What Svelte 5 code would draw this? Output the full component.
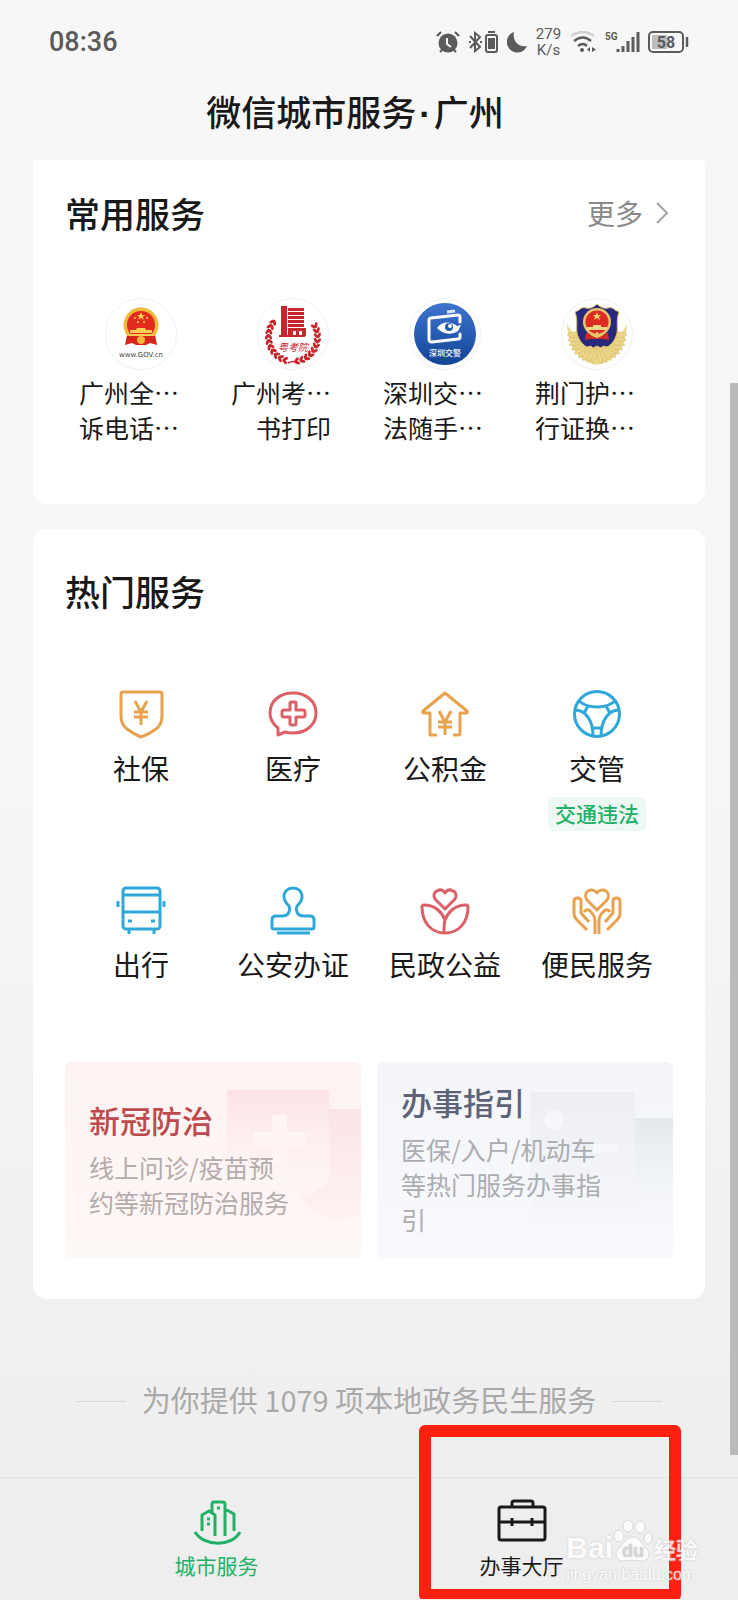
<script>
  const common = [
    { icon: 'gov', lines: ['广州全⋯', '诉电话⋯'] },
    { icon: 'exam', lines: ['广州考⋯', '书打印'] },
    { icon: 'traffic', lines: ['深圳交⋯', '法随手⋯'] },
    { icon: 'police', lines: ['荆门护⋯', '行证换⋯'] }
  ];

  const hot = [
    { icon: 'shield', label: '社保', tone: 'orange' },
    { icon: 'medical', label: '医疗', tone: 'red' },
    { icon: 'house', label: '公积金', tone: 'orange' },
    { icon: 'wheel', label: '交管', tone: 'blue', tag: '交通违法' },
    { icon: 'bus', label: '出行', tone: 'blue' },
    { icon: 'stamp', label: '公安办证', tone: 'blue' },
    { icon: 'flower', label: '民政公益', tone: 'red' },
    { icon: 'hands', label: '便民服务', tone: 'orange' }
  ];

  const tabs = [
    { id: 'city', label: '城市服务' },
    { id: 'hall', label: '办事大厅' }
  ];

  let active = $state('city');

  // wreath leaves, as angles in degrees measured from straight down
  const leaves = [14, 26, 38, 50, 62, 74, 86, 98, 110, 122];
  const feathers = [8, 18, 28, 38, 48, 58, 68, 78, 88];
</script>

{#snippet emblem(name)}
  <svg class="emblem" viewBox="0 0 72 72" aria-hidden="true">
    <circle cx="36" cy="36" r="35.5" fill="#fff" stroke="#f0f0f0" />
    {#if name === 'gov'}
      <path d="M22 37h28l2 10-7-2-4 2H31l-4-2-7 2z" fill="#d9261c" />
      <circle cx="36" cy="27" r="17.5" fill="#f0b93a" />
      <circle cx="36" cy="27" r="14" fill="#e32a1e" />
      <path d="M36 14l1.100 3h3.200l-2.600 1.900 1 3.100-2.700-1.900-2.700 1.900 1-3.100-2.600-1.900h3.200z" fill="#fbd04a" />
      <path d="M29 19h2v2h-2zM41 19h2v2h-2zM32 23h2v2h-2zM38 23h2v2h-2z" fill="#f6b23c" />
      <path d="M32 30h8l1 2h6v3H25v-3h6zM24 36h24v2H24z" fill="#fbcf52" />
      <path d="M22 38h10l4 3 4-3h10v7l-7-1-3 2h-8l-3-2-7 1z" fill="#d9261c" />
      <circle cx="36" cy="42" r="4" fill="#f0b93a" />
      <text x="36" y="59" text-anchor="middle" class="gov-url">www.GOV.cn</text>
    {:else if name === 'exam'}
      <g fill="#c9252c">
        <path d="M24 8h6v31h-6zM22 37h26v2H22zM31 10h16v3H31zM31 14h16v3H31zM31 18h16v3H31zM31 22h16v3H31zM31 26h16v3H31zM31 30h18v8h-4v-5h-3v5h-3v-5h-3v5h-5z" />
        {#each leaves as a}
          {#each [a, -a] as turn}
            <g transform="rotate({turn} 36 39)">
              <ellipse cx="34" cy="65" rx="3" ry="1.500" transform="rotate(35 34 65)" />
              <ellipse cx="34" cy="62" rx="3" ry="1.500" transform="rotate(-35 34 62)" />
            </g>
          {/each}
        {/each}
        <path d="M31 65q5-3 10 0" fill="none" stroke="#c9252c" stroke-width="1.500" />
        <text x="36" y="53" text-anchor="middle" class="exam-name">粤考院</text>
      </g>
    {:else if name === 'traffic'}
      <defs>
        <linearGradient id="traffic-bg" x1="0" y1="0" x2="0" y2="1">
          <stop offset="0" stop-color="#3f74cf" />
          <stop offset="1" stop-color="#124596" />
        </linearGradient>
      </defs>
      <circle cx="36" cy="36" r="31" fill="url(#traffic-bg)" />
      <path d="M51 24v-5q0-2-2-2l-27 3q-2 0-2 2v19q0 3 3 3l26-3q2 0 2-2v-3" fill="none" stroke="#fff" stroke-width="3" stroke-linecap="round" />
      <path d="M38 14l8-1" stroke="#dfe9fb" stroke-width="3" />
      <path d="M28 30c5-7 14-7 20-2l4-1-3 6c-6 4-15 4-21-3z" fill="#fff" />
      <circle cx="40" cy="29" r="4" fill="#235cb5" />
      <circle cx="41" cy="28" r="2" fill="#fff" />
      <text x="36" y="58" text-anchor="middle" class="traffic-name">深圳交警</text>
    {:else}
      <path d="M6 26c1 22 12 38 30 41 18-3 29-19 30-41-4 8-10 14-18 20H24C16 40 10 34 6 26z" fill="#ecd78f" />
      <g fill="#ead487" stroke="#d6b964" stroke-width=".5">
        {#each feathers as a}
          {#each [a, -a] as turn}
            <path d="M36 66c-4-5-4-13 0-20 4 7 4 15 0 20z" transform="rotate({turn} 36 36)" />
          {/each}
        {/each}
      </g>
      <path d="M36 6c4 4 8 5 11 4 3-1 5 0 7 2l4 2c-3 8-1 15-2 21-2 8-6 12-10 14l-4-1-2 2-4-2-4 2-2-2-4 1c-4-2-8-6-10-14-1-6 1-13-2-21l4-2c2-2 4-3 7-2 3 1 7 0 11-4z" fill="#28297c" stroke="#d9bd6c" />
      <path d="M25 35h22l1 7-6-1H30l-6 1z" fill="#cf2a25" />
      <circle cx="36" cy="24" r="14" fill="#e9c568" />
      <circle cx="36" cy="24" r="11.500" fill="#dc2b24" />
      <path d="M36 14l1 3h3l-2 2 1 3-3-2-3 2 1-3-2-2h3z" fill="#f8d25c" />
      <path d="M32 27h8v2h6v3H26v-3h6z" fill="#f7d788" />
      <path d="M36 34v6M30 36q6 5 12 0" fill="none" stroke="#e9c568" stroke-width="2" />
    {/if}
  </svg>
{/snippet}

{#snippet lineIcon(name)}
  <svg class="line-icon" viewBox="0 0 48 48" aria-hidden="true">
    {#if name === 'shield'}
      <path d="M6 2h37q2 0 2 2v22c0 6-2 10-6 13-4 3-9 6-15 8-5-2-10-5-14-8-4-3-6-7-6-13V4q0-2 2-2z" />
      <path d="M18 11l6 11 6-11M17 22h14M17 27h14M24 22v13" />
    {:else if name === 'medical'}
      <path d="M9 45V38C4 34 1 29 1 23 1 11 11 3 24 3s23 8 23 20-10 20-23 20c-3 0-5 0-8-1z" />
      <path d="M23 12h3q1 0 1 1v7h7q2 0 2 2v3q0 2-2 2h-7v7q0 1-2 1h-2q-2 0-2-1v-7h-6q-2 0-2-2v-3q0-2 2-2h6v-7q0-1 2-1z" />
    {:else if name === 'house'}
      <path d="M16 45H9V23H3q-2 0-1-2L24 3l22 18q1 2-1 2h-6v20q0 2-2 2h-5" />
      <path d="M18 21l6 11 6-11M17 32h14M17 37h14M24 32v13" />
    {:else if name === 'wheel'}
      <circle cx="24" cy="24" r="22.500" />
      <path d="M6 11c9 8 27 8 36 0M2 20c11 0 18 11 18 26M46 20c-11 0-18 11-18 26M15 16l-4 7M33 16l4 7M20 38h8" />
    {:else if name === 'bus'}
      <rect x="6" y="2" width="37" height="41" rx="3" />
      <path d="M6 9h37M6 26h37M1 15v6M47 15v6M11 35h4M34 35h4M12 43v5M37 43v5" />
    {:else if name === 'stamp'}
      <path d="M20 26c1-2 1-4 0-6-3-3-5-5-5-9 0-6 4-9 9-9s9 3 9 9c0 4-2 6-5 9-1 2-1 4 0 6 1 3 4 4 7 4h6q4 0 4 4v7q0 2-2 2H5q-2 0-2-2v-7q0-4 4-4h6c3 0 6-1 7-4z" />
      <path d="M8 47h33" />
    {:else if name === 'flower'}
      <path d="M24 23L14 13c-2-3-1-7 2-8 3-2 6-1 8 2 2-3 5-4 8-2 3 1 4 5 2 8z" />
      <path d="M24 34C21 26 14 19 3 19q-2 0-2 2c0 15 9 26 23 26s23-11 23-26q0-2-2-2c-11 0-18 7-21 15q-1 3-1 13" />
    {:else if name === 'hands'}
      <path d="M24 24L14 14c-2-3-2-7 1-9 3-2 7-1 9 2 2-3 6-4 9-2 3 2 3 6 1 9z" />
      <path d="M14 44L4 34q-3-3-3-6V15c0-4 7-4 7 0v12l8 9M11 26c2-3 5-3 7 0 3 3 4 5 4 9v13" />
      <path d="M34 44l10-10q3-3 3-6V15c0-4-7-4-7 0v12l-8 9M37 26c-2-3-5-3-7 0-3 3-4 5-4 9v13" />
    {:else if name === 'city'}
      <path d="M2 33c9 15 37 15 45 0M9 32V16l7-4 6 4v21M19 14V5q0-2 2-2h9q2 0 2 2v32M32 10l9 5v17" />
      <path d="M24 9h3M14 20h3M14 25h3" />
    {:else if name === 'hall'}
      <rect x="1" y="8" width="46" height="33" rx="2" />
      <path d="M14 8V4q0-2 2-2h17q2 0 2 2v4M1 23h46M14 19v8M34 19v8" />
    {/if}
  </svg>
{/snippet}

<div class="page">
  <div class="status">
    <time>08:36</time>
    <div class="status-icons">
      <svg width="24" height="22" viewBox="0 0 24 22" aria-hidden="true">
        <circle cx="12" cy="12" r="9.500" fill="#5b5b5b" />
        <path d="M1 5l4-4M23 5l-4-4M4 21l3-3M20 21l-3-3" stroke="#5b5b5b" stroke-width="2.200" />
        <path d="M11 7v6l4 3" fill="none" stroke="#f6f6f6" stroke-width="2" />
      </svg>
      <svg width="31" height="22" viewBox="0 0 31 22" fill="none" stroke="#5b5b5b" stroke-width="2" aria-hidden="true">
        <path d="M2 5l10 11-5 4V2l5 4L2 17M1 11h2M12 11h2" />
        <rect x="18" y="4" width="11" height="17" rx="2" />
        <path d="M20 1h7" />
        <path d="M20 7h7v11h-7z" fill="#5b5b5b" stroke="none" />
      </svg>
      <svg width="20" height="22" viewBox="0 0 20 22" aria-hidden="true">
        <path d="M7 1a10.500 10.500 0 1 0 13 14C12 17 5 10 7 1z" fill="#5b5b5b" />
      </svg>
      <div class="speed"><span>279</span><span>K/s</span></div>
      <svg width="27" height="22" viewBox="0 0 27 22" fill="none" stroke="#5b5b5b" stroke-width="2.500" aria-hidden="true">
        <path d="M1 5q12-8 23 0" stroke="#cfcfcf" />
        <path d="M4 10q9-7 17 0M8 15q5-4 9 0" />
        <circle cx="12" cy="19" r="2" fill="#5b5b5b" stroke="none" />
        <path d="M20 16v5l-3-2.500zM22 16v5l4-2.500z" fill="#5b5b5b" stroke="none" />
      </svg>
      <svg width="35" height="22" viewBox="0 0 35 22" aria-hidden="true">
        <text x="0" y="9" class="net">5G</text>
        <path d="M13 18v3M18 15v6M23 10v11M28 6v15M33 1v20" stroke="#5b5b5b" stroke-width="3" />
      </svg>
      <svg width="41" height="22" viewBox="0 0 41 22" aria-hidden="true">
        <rect x="1" y="1" width="34" height="20" rx="4" fill="none" stroke="#5b5b5b" stroke-width="2" />
        <path d="M4 4h15v14H4z" fill="#bdbdbd" />
        <path d="M39 6v10" stroke="#5b5b5b" stroke-width="2.500" />
        <text x="18" y="17" text-anchor="middle" class="level">58</text>
      </svg>
    </div>
  </div>

  <h1>微信城市服务<span class="dot">·</span>广州</h1>

  <main>
    <section class="card card-common">
      <div class="card-head">
        <h2>常用服务</h2>
        <a class="more" href="#more">
          更多
          <svg width="14" height="22" viewBox="0 0 14 22" aria-hidden="true">
            <path d="M2 1l10 10L2 21" fill="none" stroke="#a3a3a3" stroke-width="2" />
          </svg>
        </a>
      </div>
      <div class="grid grid-common">
        {#each common as item}
          <a class="common-item" href="#{item.icon}">
            {@render emblem(item.icon)}
            <span class="common-label">
              {#each item.lines as line}
                <span>{line}</span>
              {/each}
            </span>
          </a>
        {/each}
      </div>
    </section>

    <section class="card card-hot">
      <h2>热门服务</h2>
      <div class="grid grid-hot">
        {#each hot as item}
          <a class="hot-item {item.tone}" href="#{item.icon}">
            {@render lineIcon(item.icon)}
            <span class="hot-label">{item.label}</span>
            {#if item.tag}
              <span class="tag">{item.tag}</span>
            {/if}
          </a>
        {/each}
      </div>

      <div class="banners">
        <a class="banner banner-red" href="#covid">
          <svg class="banner-art" viewBox="0 0 295 196" aria-hidden="true">
            <defs>
              <linearGradient id="red-fade" x1="0" y1="0" x2="0" y2="1">
                <stop offset="0" stop-color="#fce2e4" />
                <stop offset="1" stop-color="#fdeeee" stop-opacity="0" />
              </linearGradient>
              <linearGradient id="red-side" x1="0" y1="0" x2="0" y2="1">
                <stop offset="0" stop-color="#fce3e5" />
                <stop offset="1" stop-color="#fdeded" stop-opacity="0.500" />
              </linearGradient>
            </defs>
            <path d="M263 47h32v106q-45 12-60-18 20-6 28-17z" fill="url(#red-side)" />
            <path d="M165 28h94q4 0 4 4v90q-60 10-102-10V32q0-4 4-4z" fill="url(#red-fade)" />
            <path d="M206 53h15v17h18v15h-18v17h-15V85h-18V70h18z" fill="#fff5f4" />
          </svg>
          <strong>新冠防治</strong>
          <span class="desc">线上问诊/疫苗预约等新冠防治服务</span>
        </a>
        <a class="banner banner-blue" href="#guide">
          <svg class="banner-art" viewBox="0 0 295 196" aria-hidden="true">
            <defs>
              <linearGradient id="blue-fade" x1="0" y1="0" x2="0" y2="1">
                <stop offset="0" stop-color="#eceef2" />
                <stop offset="1" stop-color="#f3f5f9" stop-opacity="0.500" />
              </linearGradient>
              <linearGradient id="blue-side" x1="0" y1="0" x2="0" y2="1">
                <stop offset="0" stop-color="#e4e8ec" />
                <stop offset="1" stop-color="#f3f5f9" stop-opacity="0" />
              </linearGradient>
            </defs>
            <path d="M257 56h38v120h-70l-14-14h46z" fill="url(#blue-side)" />
            <rect x="152" y="30" width="105" height="132" rx="3" fill="url(#blue-fade)" />
            <circle cx="176" cy="58" r="10" fill="#f5f7fb" />
            <path d="M279 43h9v9h-9zM215 82h24v9h-24z" fill="#f5f7fb" />
          </svg>
          <strong>办事指引</strong>
          <span class="desc">医保/入户/机动车等热门服务办事指引</span>
        </a>
      </div>
    </section>

    <p class="note">为你提供 1079 项本地政务民生服务</p>
  </main>

  <nav class="tabs">
    {#each tabs as tab}
      <button type="button" class:active={active === tab.id} onclick={() => (active = tab.id)}>
        {@render lineIcon(tab.id)}
        <span>{tab.label}</span>
      </button>
    {/each}
  </nav>

  <div class="scroll-thumb"></div>
  <div class="marker"></div>

  <div class="watermark">
    <div class="wm-brand">
      <span>Bai</span>
      <svg width="40" height="44" viewBox="0 0 40 44" aria-hidden="true">
        <g fill="#fff" stroke="#d2d2d2">
          <ellipse cx="6" cy="17" rx="5" ry="6" />
          <ellipse cx="15" cy="7" rx="5" ry="6" />
          <ellipse cx="27" cy="8" rx="5" ry="6" />
          <ellipse cx="35" cy="19" rx="4" ry="6" />
          <path d="M20 18c7 0 8 7 13 11 6 6 2 14-5 13-5-1-11-1-16 0-8 1-12-7-6-13 5-4 7-11 14-11z" />
        </g>
        <text x="20" y="38" text-anchor="middle" class="wm-du">du</text>
      </svg>
      <span class="wm-cn">经验</span>
    </div>
    <div class="wm-url">jingyan.baidu.com</div>
  </div>
</div>

<style>
  :global(body) {
    margin: 0;
    background: #efefef;
  }

  .page {
    position: relative;
    overflow: hidden;
    background: linear-gradient(#f7f7f7 0%, #f6f6f6 50%, #f0f0f0 82%, #eeeeee 100%);
    color: #191919;
    font-family: Roboto, 'Noto Sans CJK SC', sans-serif;
  }

  h1,
  h2,
  p {
    margin: 0;
  }

  a {
    color: inherit;
    text-decoration: none;
  }

  /* Status bar */
  .status {
    display: flex;
    align-items: center;
    justify-content: space-between;
    height: 84px;
    padding: 0 49px;
    color: #5b5b5b;
  }

  .status time {
    font-size: 27px;
    font-weight: 500;
  }

  .status-icons {
    display: flex;
    align-items: center;
    gap: 8px;
  }

  .speed {
    display: flex;
    flex-direction: column;
    width: 27px;
    font-size: 15px;
    line-height: 16px;
    text-align: center;
  }

  .net {
    font-size: 10px;
    font-weight: 700;
    fill: #5b5b5b;
  }

  .level {
    font-size: 16px;
    font-weight: 700;
    fill: #5b5b5b;
  }

  h1 {
    padding-right: 28px;
    font-family: 'Noto Sans CJK SC', sans-serif;
    font-size: 35px;
    font-weight: 500;
    line-height: 54px;
    text-align: center;
  }

  .dot {
    padding: 0 3px;
    font-family: 'Liberation Sans', sans-serif;
    font-weight: 700;
  }

  main {
    padding: 19px 33px 0;
    font-family: 'Noto Sans CJK SC', sans-serif;
  }

  /* Cards */
  .card {
    padding: 30px 32px 0;
    background: #fff;
    border-radius: 14px;
  }

  .card-common {
    padding-bottom: 59px;
    border-radius: 2px 2px 14px 14px;
  }

  .card-hot {
    margin-top: 25px;
    padding-top: 39px;
    padding-bottom: 41px;
  }

  .card-head {
    display: flex;
    align-items: center;
    justify-content: space-between;
  }

  h2 {
    font-size: 35px;
    font-weight: 500;
    line-height: 46px;
  }

  .more {
    display: flex;
    align-items: center;
    gap: 12px;
    padding-right: 4px;
    color: #888;
    font-size: 28px;
    line-height: 46px;
  }

  .grid {
    display: grid;
    grid-template-columns: repeat(4, 1fr);
  }

  .grid-common {
    margin-top: 62px;
  }

  .common-item {
    display: flex;
    flex-direction: column;
    align-items: center;
    gap: 5px;
  }

  .emblem {
    width: 72px;
    height: 72px;
  }

  .common-label {
    display: flex;
    flex-direction: column;
    padding-right: 24px;
    font-size: 25px;
    line-height: 35px;
    text-align: right;
  }

  .gov-url {
    font-family: 'DejaVu Sans', sans-serif;
    font-size: 7px;
    fill: #444;
  }

  .exam-name {
    font-family: 'Noto Sans CJK SC', sans-serif;
    font-size: 10px;
    font-style: italic;
  }

  .traffic-name {
    font-family: 'Noto Sans CJK SC', sans-serif;
    font-size: 8px;
    font-weight: 500;
    fill: #fff;
  }

  .grid-hot {
    row-gap: 55px;
    margin-top: 76px;
  }

  .hot-item {
    display: flex;
    flex-direction: column;
    align-items: center;
  }

  .line-icon {
    width: 48px;
    height: 48px;
    overflow: visible;
    fill: none;
    stroke: currentColor;
    stroke-width: 3;
    stroke-linejoin: round;
  }

  .orange .line-icon {
    color: #e8a24d;
  }

  .red .line-icon {
    color: #dc6067;
  }

  .blue .line-icon {
    color: #2ea7d9;
  }

  .hot-label {
    margin-top: 13px;
    font-size: 28px;
    line-height: 34px;
  }

  .tag {
    margin-top: 12px;
    padding: 0 7px 2px;
    border-radius: 6px;
    background: #edf9f2;
    color: #1fb067;
    font-size: 21px;
    font-weight: 500;
    line-height: 32px;
  }

  /* Banners */
  .banners {
    display: grid;
    grid-template-columns: 1fr 1fr;
    gap: 16px;
    margin-top: 81px;
  }

  .banner {
    position: relative;
    display: flex;
    flex-direction: column;
    justify-content: center;
    height: 196px;
    padding: 0 24px 2px;
    box-sizing: border-box;
    border-radius: 6px;
    overflow: hidden;
  }

  .banner-red {
    background: linear-gradient(#fef2f2, #fef8f7);
  }

  .banner-blue {
    background: linear-gradient(#f3f5f9, #f8f9fc);
  }

  .banner-art {
    position: absolute;
    top: 0;
    right: 0;
    height: 100%;
  }

  .banner strong {
    position: relative;
    margin-bottom: 10px;
    font-size: 31px;
    font-weight: 500;
    line-height: 41px;
  }

  .banner-red strong {
    color: #bd4a4d;
  }

  .banner-blue strong {
    color: #5d6378;
  }

  .desc {
    position: relative;
    max-width: 202px;
    color: #acadb0;
    font-size: 25px;
    line-height: 35px;
  }

  .banner-red .desc {
    color: #b5abab;
  }

  .note {
    display: flex;
    align-items: center;
    justify-content: center;
    gap: 16px;
    margin-top: 80px;
    color: #a9a9a9;
    font-size: 29px;
    line-height: 40px;
    white-space: nowrap;
  }

  .note::before,
  .note::after {
    content: '';
    width: 50px;
    height: 1px;
    margin-top: 5px;
    background: #d6d6d6;
  }

  /* Tab bar */
  .tabs {
    display: flex;
    margin-top: 58px;
    padding: 21px 64px 19px;
    border-top: 1px solid #e2e2e2;
    background: #eee;
  }

  .tabs button {
    display: flex;
    flex: 1;
    flex-direction: column;
    align-items: center;
    gap: 3px;
    padding: 0;
    border: 0;
    background: none;
    color: #191919;
    font-family: 'Noto Sans CJK SC', sans-serif;
    font-size: 21px;
    line-height: 30px;
    cursor: pointer;
  }

  .tabs button.active {
    color: #22b066;
  }

  /* Overlays */
  .scroll-thumb {
    position: absolute;
    top: 383px;
    right: 0;
    width: 8px;
    height: 1072px;
    background: #bababa;
  }

  .marker {
    position: absolute;
    right: 57px;
    bottom: -2px;
    box-sizing: border-box;
    width: 262px;
    height: 176px;
    border: 12px solid #ff2010;
    border-radius: 6px;
  }

  .watermark {
    position: absolute;
    right: 40px;
    bottom: 12px;
    color: #fff;
    text-shadow: 0 0 2px #bbb;
    opacity: 0.8;
  }

  .wm-brand {
    display: flex;
    align-items: flex-end;
    height: 44px;
    font-family: 'Liberation Sans', sans-serif;
    font-size: 30px;
    font-weight: 700;
    line-height: 30px;
  }

  .wm-cn {
    margin-left: 1px;
    font-family: 'Noto Sans CJK SC', sans-serif;
    font-size: 22px;
  }

  .wm-du {
    font-size: 18px;
    font-weight: 700;
    fill: #cfcfcf;
  }

  .wm-url {
    font-family: 'Liberation Sans', sans-serif;
    font-size: 16px;
    line-height: 24px;
  }
</style>
